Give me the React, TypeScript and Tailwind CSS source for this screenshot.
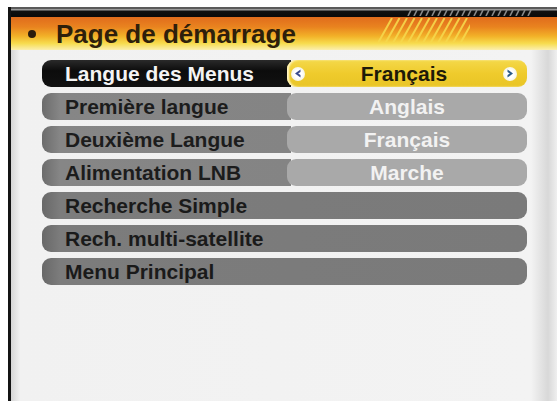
import React from 'react'

const FONT = { fontFamily: '"Liberation Sans", Arial, sans-serif' }

type Row = { label: string; value?: string; active?: boolean }

const ROWS: Row[] = [
  { label: 'Langue des Menus', value: 'Français', active: true },
  { label: 'Première langue', value: 'Anglais' },
  { label: 'Deuxième Langue', value: 'Français' },
  { label: 'Alimentation LNB', value: 'Marche' },
  { label: 'Recherche Simple' },
  { label: 'Rech. multi-satellite' },
  { label: 'Menu Principal' },
]

function Arrow({ dir }: { dir: 'left' | 'right' }) {
  return (
    <span className="flex h-[14px] w-[14px] items-center justify-center rounded-full bg-[radial-gradient(circle,#ffffff_40%,#ece9c4_100%)]">
      <svg width="8" height="9" viewBox="0 0 8 9">
        {dir === 'left' ? (
          <path d="M6.5 0.5 L1 4.5 L6.5 8.5 L6.5 6 L4.2 4.5 L6.5 3 Z" fill="#3a4c8e" />
        ) : (
          <path d="M1.5 0.5 L7 4.5 L1.5 8.5 L1.5 6 L3.8 4.5 L1.5 3 Z" fill="#2c5a88" />
        )}
      </svg>
    </span>
  )
}

function MenuRow({ row }: { row: Row }) {
  if (row.active) {
    return (
      <div className="flex h-[27px] items-stretch">
        <div className="flex w-[249px] items-center rounded-l-[9px] bg-[linear-gradient(180deg,#2a2a2a,#0c0c0c_40%,#111111)] pl-[23px] text-[21px] font-bold leading-none text-[#f4f4f4]">
          {row.label}
        </div>
        <div className="-ml-[4px] flex flex-1 items-center justify-between rounded-[9px] bg-[linear-gradient(180deg,#f4d84a,#efcb2c_50%,#e9c526)] pl-[4px] pr-[10px] shadow-[inset_2px_0_2px_#fff6c8]">
          <Arrow dir="left" />
          <span className="text-[21px] font-bold leading-none text-[#1e1a08]">{row.value}</span>
          <Arrow dir="right" />
        </div>
      </div>
    )
  }
  if (row.value) {
    return (
      <div className="flex h-[27px] items-stretch">
        <div className="flex w-[249px] items-center rounded-l-[9px] bg-[linear-gradient(90deg,#6c6c6c,#868686_18px,#848484)] pl-[23px] text-[21px] font-bold leading-none text-[#1c1c1c]">
          {row.label}
        </div>
        <div className="-ml-[4px] flex flex-1 items-center justify-center rounded-[9px] bg-[#a9a9a9] text-[21px] font-bold leading-none text-[#f2f2f2]">
          {row.value}
        </div>
      </div>
    )
  }
  return (
    <div className="flex h-[27px] items-center rounded-[9px] bg-[linear-gradient(90deg,#686868,#7c7c7c_18px,#7a7a7a)] pl-[23px] text-[21px] font-bold leading-none text-[#1a1a1a]">
      {row.label}
    </div>
  )
}

export default function App() {
  return (
    <div className="h-[401px] w-[557px] overflow-hidden bg-white pl-2 pt-[7px]" style={FONT}>
      <div className="flex h-full flex-col border-l-[3px] border-[#141414] bg-[linear-gradient(90deg,#d6d6d6,#f1f1f1_9px,#f3f3f3_calc(100%_-_26px),#d8d8d8_calc(100%_-_9px),#efefef)]">
        {/* top dark band */}
        <div className="relative h-[10px] border-t-[2px] border-[#5a5a5a] bg-[linear-gradient(180deg,#9a9a9a_0,#9a9a9a_1px,#101010_2px,#0a0a0a)]">
          <svg className="absolute left-[396px] top-[1px]" width="128" height="6" viewBox="0 0 128 6">
            {Array.from({ length: 21 }).map((_, i) => (
              <line key={i} x1={i * 6 + 1} y1={6} x2={i * 6 + 4} y2={0} stroke="#8a8a8a" strokeWidth="1.6" />
            ))}
          </svg>
        </div>

        {/* title header */}
        <div className="relative flex h-[33px] items-center bg-[linear-gradient(180deg,#e06c1c_0%,#e9831f_30%,#f2b128_58%,#f7dc4e_80%,#fbefb0_100%)] pl-[17px]">
          <span className="h-[8px] w-[8px] rounded-full bg-[#2a1c0c]" />
          <span className="ml-[20px] text-[26px] font-bold leading-none text-[#2e1f0b]">Page de démarrage</span>
          <svg className="absolute left-[367px] top-[1px]" width="92" height="25" viewBox="0 0 92 25">
            {Array.from({ length: 12 }).map((_, i) => (
              <line key={i} x1={i * 7.5} y1={25} x2={i * 7.5 + 14} y2={0} stroke="#f6d84c" strokeWidth="2" opacity="0.9" />
            ))}
          </svg>
        </div>

        {/* menu */}
        <div className="flex flex-col gap-[6px] pl-[31px] pr-[30px] pt-[10px]">
          {ROWS.map((r) => (
            <MenuRow key={r.label} row={r} />
          ))}
        </div>
      </div>
    </div>
  )
}
